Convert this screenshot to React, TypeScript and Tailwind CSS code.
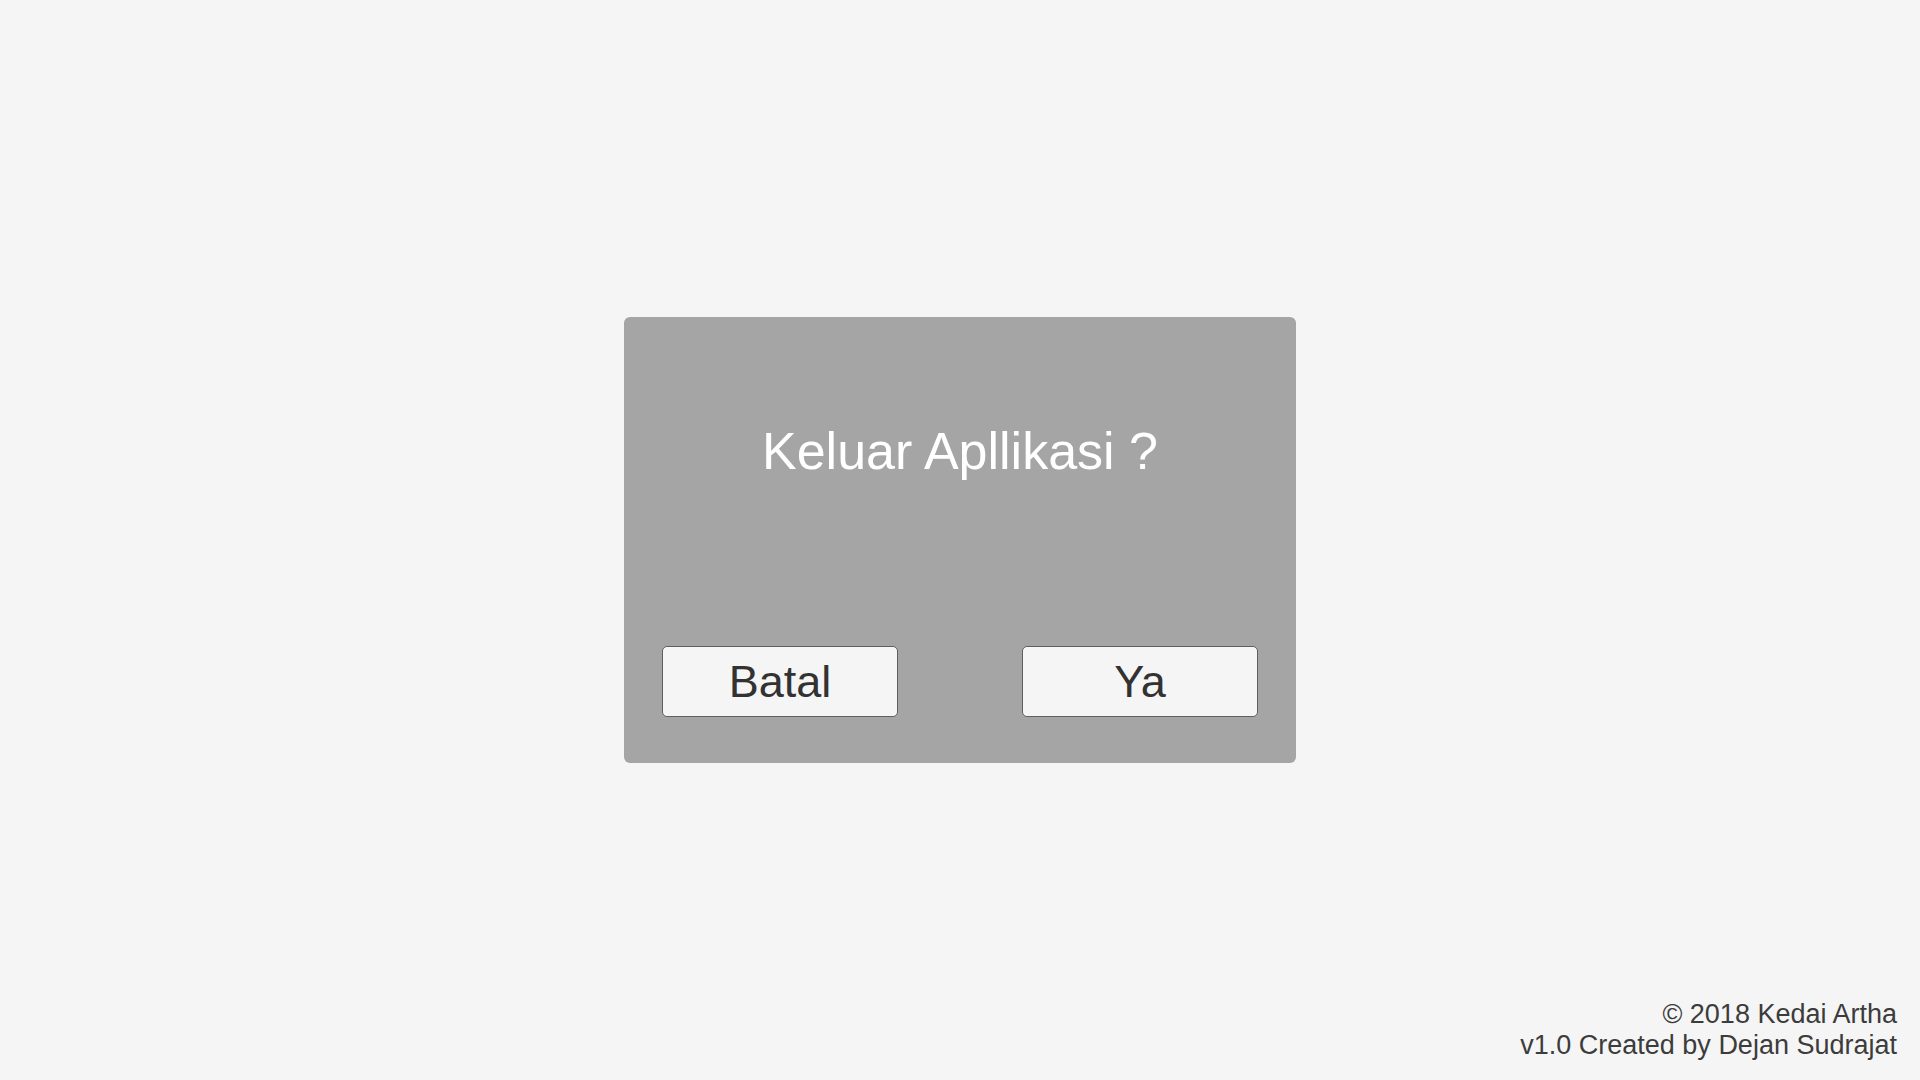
export default function App() {
  return (
    <div className="flex h-screen w-full flex-col bg-[#f5f5f5] font-['Liberation_Sans',Arial,sans-serif]">
      {/* Dialog area */}
      <main className="flex flex-1 items-center justify-center pt-[81px]">
        <div className="flex h-[446px] w-[672px] flex-col rounded-[6px] bg-[#a5a5a5] px-[38px] pb-[46px]">
          <h1 className="pt-[106px] text-center text-[52px] leading-[56px] text-white">
            Keluar Apllikasi ?
          </h1>
          <div className="mt-auto flex items-center justify-between">
            <button className="h-[71px] w-[236px] rounded-[5px] border border-[#5f5f5f] bg-[#f5f5f5] text-[45px] leading-none text-[#323232]">
              Batal
            </button>
            <button className="h-[71px] w-[236px] rounded-[5px] border border-[#5f5f5f] bg-[#f5f5f5] text-[45px] leading-none text-[#323232]">
              Ya
            </button>
          </div>
        </div>
      </main>

      {/* Footer */}
      <footer className="px-[23px] pb-[19px] text-right text-[27px] leading-[31px] text-[#3c3c3c]">
        <p>© 2018 Kedai Artha</p>
        <p>v1.0 Created by Dejan Sudrajat</p>
      </footer>
    </div>
  )
}
